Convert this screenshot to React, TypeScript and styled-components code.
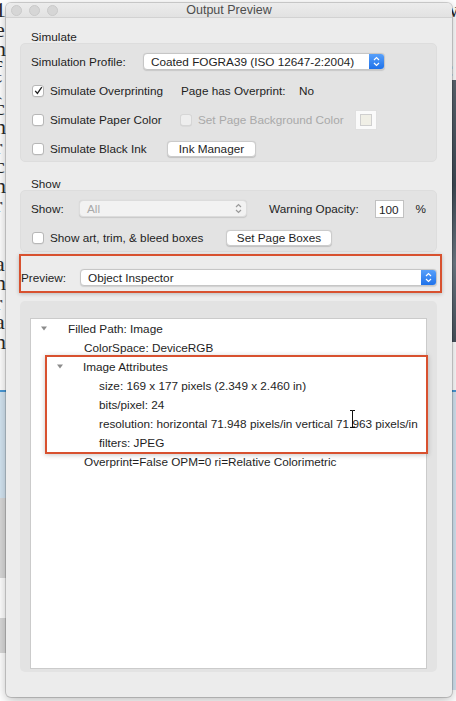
import React from 'react';
import styled, { createGlobalStyle } from 'styled-components';

const GlobalStyle = createGlobalStyle`
  html, body {
    margin: 0;
    padding: 0;
    background: #fff;
  }
  * {
    box-sizing: border-box;
  }
`

const Screen = styled.div`
  position: relative;
  width: 456px;
  height: 701px;
  overflow: hidden;
  background: #fff;
  font-family: "Liberation Sans", Arial, sans-serif;
  font-size: 11.75px;
  color: #1e1e1e;
`

// the document page behind the dialog, only its edges show
const Backdrop = styled.div`
  display: grid;
  grid-template-columns: 8px 1fr 8px;
  height: 100%;
`

const Strip = styled.div`
  display: flex;
  flex-direction: column;
  overflow: hidden;
`

const PageLetters = styled.div<{ $h: number }>`
  height: ${p => p.$h}px;
  flex: none;
  overflow: hidden;
  margin-left: -5px;
  font-family: "Liberation Serif", "Times New Roman", serif;
  font-size: 22px;
  line-height: 19.5px;
  color: #2a2a2a;
  white-space: pre;
`

const PhotoBlock = styled.div`
  height: 262px;
  flex: none;
  background: linear-gradient(180deg, #5b6670 0%, #3e4a55 40%, #6d7a85 70%, #48535d 100%);
`

const BlueRule = styled.div<{ $top: number; $h: number }>`
  height: ${p => p.$h}px;
  flex: none;
  margin-top: ${p => p.$top}px;
  border-top: 2px solid #4a9ad8;
  background: #d4e5f2;
`

const GrayBand = styled.div<{ $top: number; $h: number }>`
  height: ${p => p.$h}px;
  flex: none;
  margin-top: ${p => p.$top}px;
  background: #d9d9d9;
`

const Window = styled.div`
  position: absolute;
  left: 6px;
  top: 3px;
  width: 446px;
  height: 694px;
  border-radius: 5px;
  background: #ececec;
  box-shadow: 0 0 0 1px rgba(0, 0, 0, 0.16), 0 3px 12px rgba(0, 0, 0, 0.28);
  display: flex;
  flex-direction: column;
  overflow: hidden;
`

const TitleBar = styled.div`
  height: 15px;
  flex: none;
  display: grid;
  grid-template-columns: 1fr auto 1fr;
  align-items: center;
  background: linear-gradient(#ececec, #e2e2e2);
  border-bottom: 1px solid #d2d2d2;
`

const Lights = styled.div`
  display: flex;
  gap: 7px;
  padding-left: 5px;
`

const Light = styled.span`
  width: 11px;
  height: 11px;
  border-radius: 50%;
  background: #d6d6d6;
  border: 1px solid #c9c9c9;
`

const Title = styled.div`
  font-size: 12.5px;
  color: #4d4d4d;
  line-height: 14px;
`

const Content = styled.div`
  flex: 1;
  display: flex;
  flex-direction: column;
  padding: 0 15px 25px 14px;
`

const SectionLabel = styled.div<{ $top: number }>`
  padding: ${p => p.$top}px 0 0 11px;
  line-height: 14px;
  height: ${p => p.$top + 13}px;
  flex: none;
`

const Group = styled.div<{ $h: number }>`
  height: ${p => p.$h}px;
  flex: none;
  padding: 3px 10px 0 10px;
  background: #e3e3e3;
  border-radius: 5px;
  border: 1px solid #dddddd;
`

const Row = styled.div`
  height: 29px;
  display: flex;
  align-items: center;
`

const Cell = styled.div<{ $w?: number; $pad?: number }>`
  display: flex;
  align-items: center;
  flex: none;
  width: ${p => (p.$w ? `${p.$w}px` : 'auto')};
  padding-left: ${p => p.$pad ?? 0}px;
`

const Label = styled.span<{ $disabled?: boolean }>`
  white-space: nowrap;
  color: ${p => (p.$disabled ? '#a9a9a9' : '#1e1e1e')};
`

const Box = styled.span<{ $disabled?: boolean }>`
  width: 12px;
  height: 12px;
  margin: 0 6px 0 1px;
  border-radius: 3px;
  background: ${p => (p.$disabled ? '#eeeeee' : '#fff')};
  border: 1px solid ${p => (p.$disabled ? '#d6d6d6' : '#b7b7b7')};
  box-shadow: 0 0.5px 0.5px rgba(0, 0, 0, 0.08);
  display: flex;
  align-items: center;
  justify-content: center;
  flex: none;
`

const PopupBox = styled.div<{ $w: number; $disabled?: boolean }>`
  width: ${p => p.$w}px;
  height: 17px;
  display: flex;
  align-items: center;
  border-radius: 4px;
  background: ${p => (p.$disabled ? '#f2f2f2' : '#fff')};
  border: 1px solid ${p => (p.$disabled ? '#dcdcdc' : '#c6c6c6')};
  box-shadow: 0 0.5px 1px rgba(0, 0, 0, 0.12);
  overflow: hidden;
  flex: none;
`

const PopupText = styled.span<{ $disabled?: boolean }>`
  flex: 1;
  padding-left: 7px;
  color: ${p => (p.$disabled ? '#a9a9a9' : '#1e1e1e')};
  white-space: nowrap;
`

const Stepper = styled.span<{ $blue?: boolean }>`
  width: 15px;
  height: 100%;
  display: flex;
  align-items: center;
  justify-content: center;
  background: ${p => (p.$blue ? 'linear-gradient(#58a0fa, #1f72ea)' : 'transparent')};
`

const Button = styled.div<{ $w: number }>`
  width: ${p => p.$w}px;
  height: 16px;
  display: flex;
  align-items: center;
  justify-content: center;
  background: #fff;
  border: 1px solid #cbcbcb;
  border-radius: 4px;
  box-shadow: 0 0.5px 1px rgba(0, 0, 0, 0.15);
  white-space: nowrap;
`

const ColorWell = styled.div`
  width: 22px;
  height: 20px;
  padding: 3px 4px;
  background: #fafafa;
  border: 1px solid #e0e0e0;
  span {
    display: block;
    width: 100%;
    height: 100%;
    background: #f0efe6;
    border: 1px solid #cfcfcf;
  }
`

const NumberField = styled.div`
  width: 29px;
  height: 18px;
  padding: 2px 0 0 3px;
  background: #fff;
  border: 1px solid #c1c1c1;
  line-height: 14px;
`

// red annotation frames drawn over the dialog
const Highlight = styled.div`
  margin: 2px -5px 0 -1px;
  height: 39px;
  flex: none;
  padding: 13px 0 0 0;
  border: 2px solid #d8512f;
  box-shadow: 0 1px 4px rgba(0, 0, 0, 0.22);
  display: flex;
  align-items: flex-start;
`

const PreviewLabel = styled.div`
  width: 59px;
  line-height: 17px;
`

const TreeGroup = styled.div`
  flex: 1;
  margin-top: 8px;
  padding: 17px 10px 3px 10px;
  background: #e3e3e3;
  border-radius: 5px;
`

const TreeView = styled.div`
  height: 100%;
  background: #fff;
  border: 1px solid #cbcbcb;
`

const TreeRow = styled.div<{ $pad: number }>`
  height: 19px;
  display: flex;
  align-items: center;
  padding-left: ${p => p.$pad}px;
  white-space: nowrap;
`

const Toggle = styled.span<{ $w: number }>`
  width: ${p => p.$w}px;
  flex: none;
  display: flex;
  align-items: center;
  svg {
    display: block;
  }
`

const Callout = styled.div`
  margin: -2px -2px -2px 14px;
  border: 2px solid #d8512f;
  box-shadow: 0 1px 5px rgba(0, 0, 0, 0.22);
`

const Cursor = styled.svg`
  position: absolute;
  left: 349px;
  top: 410px;
`

const Check = () => (
  <svg width="9" height="9" viewBox="0 0 9 9">
    <path d="M1.2 4.8 L3.4 7.4 L7.8 1.2" fill="none" stroke="#222" strokeWidth="1.3" />
  </svg>
)

const Chevrons = ({ color }: { color: string }) => (
  <svg width="7" height="11" viewBox="0 0 7 11">
    <path d="M1 4 L3.5 1.5 L6 4 M1 7 L3.5 9.5 L6 7" fill="none" stroke={color} strokeWidth="1.2" />
  </svg>
)

const Triangle = () => (
  <svg width="6" height="5" viewBox="0 0 6 5">
    <path d="M0 0.5 L6 0.5 L3 4.5 Z" fill="#8c8c8c" />
  </svg>
)

const Checkbox: React.FC<{ label: string; checked?: boolean; disabled?: boolean; w?: number }> = ({ label, checked, disabled, w }) => (
  <Cell $w={w}>
    <Box $disabled={disabled}>{checked && <Check />}</Box>
    <Label $disabled={disabled}>{label}</Label>
  </Cell>
)

const Popup: React.FC<{ value: string; w: number; disabled?: boolean }> = ({ value, w, disabled }) => (
  <PopupBox $w={w} $disabled={disabled}>
    <PopupText $disabled={disabled}>{value}</PopupText>
    <Stepper $blue={!disabled}>
      <Chevrons color={disabled ? '#9a9a9a' : '#fff'} />
    </Stepper>
  </PopupBox>
)

const leftEdge = ['1', 'e', 'n', 'f', '(', 'c', 'h', 'r', 'c', 'n', 'r', '', '', 'a', 'n', 'r', 'a', 'n'].join('\n')
const rightEdge = ['w', '', 'I', 'c', 'v'].join('\n')

const App: React.FC = () => (
  <Screen>
    <GlobalStyle />
    <Backdrop>
      <Strip>
        <PageLetters $h={352}>{leftEdge}</PageLetters>
        <BlueRule $top={38} $h={108} />
        <GrayBand $top={0} $h={80} />
        <GrayBand $top={40} $h={35} />
      </Strip>
      <span />
      <Strip>
        <PageLetters $h={80}>{rightEdge}</PageLetters>
        <PhotoBlock />
        <BlueRule $top={48} $h={300} />
      </Strip>
    </Backdrop>

    <Window>
      <TitleBar>
        <Lights>
          <Light />
          <Light />
          <Light />
        </Lights>
        <Title>Output Preview</Title>
        <span />
      </TitleBar>

      <Content>
        <SectionLabel $top={12}>Simulate</SectionLabel>
        <Group $h={119}>
          <Row>
            <Cell $w={112}>
              <Label>Simulation Profile:</Label>
            </Cell>
            <Popup w={242} value="Coated FOGRA39 (ISO 12647-2:2004)" />
          </Row>
          <Row>
            <Checkbox w={150} checked label="Simulate Overprinting" />
            <Cell $w={118}>
              <Label>Page has Overprint:</Label>
            </Cell>
            <Label>No</Label>
          </Row>
          <Row>
            <Checkbox w={148} label="Simulate Paper Color" />
            <Checkbox w={176} disabled label="Set Page Background Color" />
            <ColorWell>
              <span />
            </ColorWell>
          </Row>
          <Row>
            <Checkbox w={136} label="Simulate Black Ink" />
            <Button $w={89}>Ink Manager</Button>
          </Row>
        </Group>

        <SectionLabel $top={15}>Show</SectionLabel>
        <Group $h={62}>
          <Row>
            <Cell $w={48}>
              <Label>Show:</Label>
            </Cell>
            <Popup w={168} value="All" disabled />
            <Cell $w={128} $pad={22}>
              <Label>Warning Opacity:</Label>
            </Cell>
            <NumberField>100</NumberField>
            <Cell $pad={12}>
              <Label>%</Label>
            </Cell>
          </Row>
          <Row>
            <Checkbox w={195} label="Show art, trim, & bleed boxes" />
            <Button $w={106}>Set Page Boxes</Button>
          </Row>
        </Group>

        <Highlight>
          <PreviewLabel>Preview:</PreviewLabel>
          <Popup w={357} value="Object Inspector" />
        </Highlight>

        <TreeGroup>
          <TreeView>
            <TreeRow $pad={10}>
              <Toggle $w={27}>
                <Triangle />
              </Toggle>
              Filled Path: Image
            </TreeRow>
            <TreeRow $pad={53}>ColorSpace: DeviceRGB</TreeRow>
            <Callout>
              <TreeRow $pad={10}>
                <Toggle $w={26}>
                  <Triangle />
                </Toggle>
                Image Attributes
              </TreeRow>
              <TreeRow $pad={52}>size: 169 x 177 pixels (2.349 x 2.460 in)</TreeRow>
              <TreeRow $pad={52}>bits/pixel: 24</TreeRow>
              <TreeRow $pad={52}>resolution: horizontal 71.948 pixels/in vertical 71.963 pixels/in</TreeRow>
              <TreeRow $pad={52}>filters: JPEG</TreeRow>
            </Callout>
            <TreeRow $pad={53}>Overprint=False OPM=0 ri=Relative Colorimetric</TreeRow>
          </TreeView>
        </TreeGroup>
      </Content>
    </Window>

    <Cursor width="7" height="18" viewBox="0 0 7 18">
      <path d="M1 0.5 H3.5 M3.5 0.5 H6 M3.5 0.5 V17.5 M1 17.5 H6" stroke="#111" strokeWidth="1" fill="none" />
    </Cursor>
  </Screen>
)

export default App
